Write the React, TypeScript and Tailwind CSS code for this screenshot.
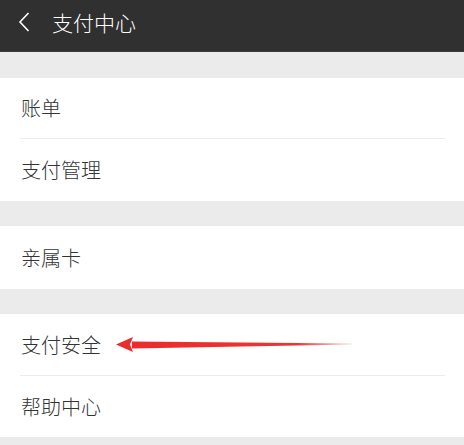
import React from 'react';

const font = { fontFamily: '"Noto Sans CJK SC", "Noto Sans", sans-serif' };

function Row({ label, h, divider, children }: { label: string; h: string; divider?: boolean; children?: React.ReactNode }) {
  return (
    <div className="relative bg-white">
      <div className={'flex items-center pl-[21px] text-[20px] font-light text-[#333333] ' + h}>
        <span className="leading-none">{label}</span>
        {children}
      </div>
      {divider && <div className="ml-[20px] mr-[19px] h-px bg-[#ececec]" />}
    </div>
  );
}

function Gap({ h }: { h: string }) {
  return <div className={'bg-[#ebebeb] ' + h} />;
}

function RedArrow() {
  return (
    <svg className="absolute left-[114px] top-[22px]" width="242" height="18" viewBox="0 0 242 18">
      <defs>
        <linearGradient id="fade" x1="0" x2="1" y1="0" y2="0">
          <stop offset="0" stopColor="#ec2b2b" />
          <stop offset="0.75" stopColor="#ec3535" />
          <stop offset="1" stopColor="#ec3535" stopOpacity="0.15" />
        </linearGradient>
      </defs>
      <path d="M18 5.5 L238 7.6 L238 8.6 L18 12.5 Z" fill="url(#fade)" />
      <path d="M2 8.5 L19 1 L16 8.5 L19 16 Z" fill="#ec2b2b" />
    </svg>
  );
}

export default function App() {
  return (
    <div className="w-[464px] h-[445px] overflow-hidden bg-[#ebebeb]" style={font}>
      <div className="flex items-center h-[52px] pb-[7px] bg-[#303030] border-b border-[#3c3c3c]">
        <svg className="ml-[17px]" width="14" height="20" viewBox="0 0 14 20">
          <path d="M11.5 1 L3 10 L11.5 19" fill="none" stroke="#ffffff" strokeWidth="1.6" />
        </svg>
        <span className="ml-[21px] text-[21px] font-light text-white leading-none">支付中心</span>
      </div>
      <Gap h="h-[26px]" />
      <Row label="账单" h="h-[60px]" divider />
      <Row label="支付管理" h="h-[62px]" />
      <Gap h="h-[25px]" />
      <Row label="亲属卡" h="h-[63px]" />
      <Gap h="h-[25px]" />
      <Row label="支付安全" h="h-[61px]" divider>
        <RedArrow />
      </Row>
      <Row label="帮助中心" h="h-[61px]" />
      <Gap h="h-[8px]" />
    </div>
  );
}
